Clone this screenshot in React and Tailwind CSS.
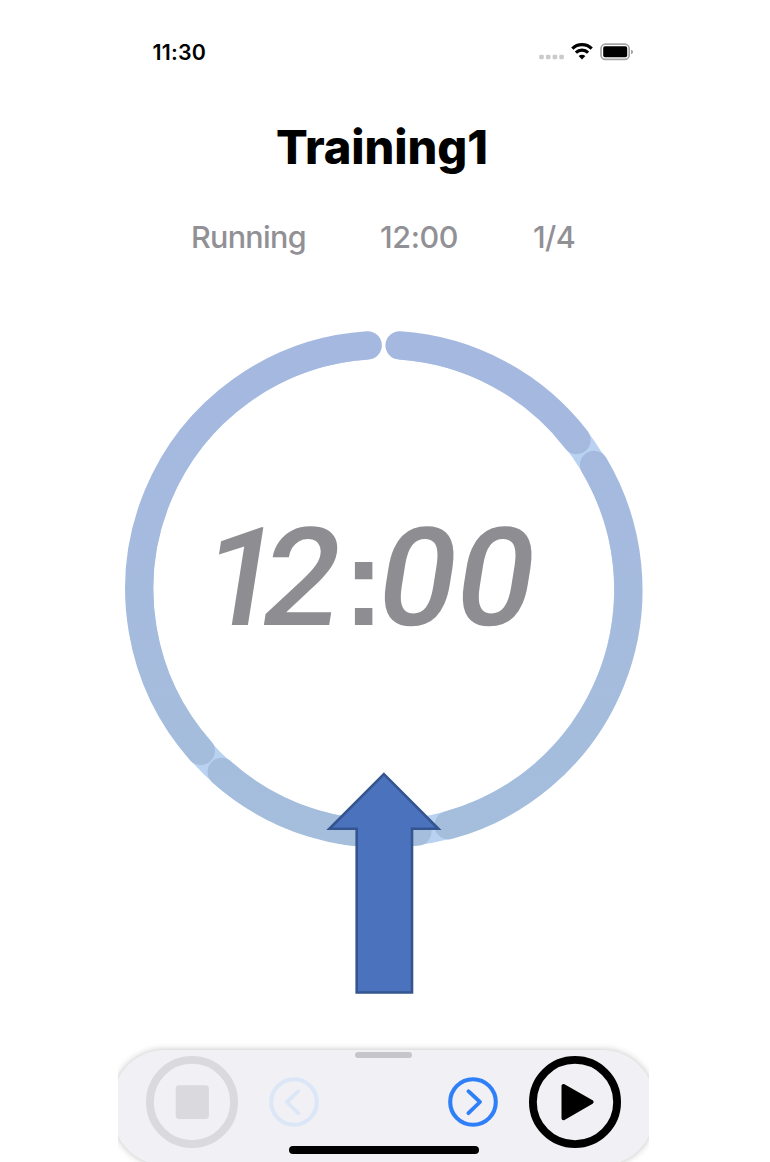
import React from "react";

const SEGMENTS = [
  "M281.6 15.4 A244.1 244.1 0 0 1 458.6 110",
  "M476.1 135 A244.1 244.1 0 0 1 330.6 495.2",
  "M299.4 501.6 A244.1 244.1 0 0 1 103.7 442",
  "M82.8 421 A244.1 244.1 0 0 1 249.7 15.4",
];

function StatusBar() {
  return (
    <div className="flex h-[104px] shrink-0 items-start justify-between pt-[38px] pr-[15px] pl-[34.5px]">
      <span className="text-[21.4px] leading-7 font-semibold tracking-[0.2px] text-black">11:30</span>
      <svg width="96" height="28" viewBox="0 0 96 28">
        <g fill="#cbcbcb">
          <rect x="1.2" y="16.8" width="4.6" height="4.4" rx="1.2" />
          <rect x="7.9" y="16.8" width="4.6" height="4.4" rx="1.2" />
          <rect x="14.6" y="16.8" width="4.6" height="4.4" rx="1.2" />
          <rect x="21.3" y="16.8" width="4.6" height="4.4" rx="1.2" />
        </g>
        <g fill="none" stroke="#000" strokeWidth="3.2">
          <path d="M34.3 10.6 A14 14 0 0 1 53.7 10.6" />
          <path d="M37.9 14.6 A8.8 8.8 0 0 1 50.1 14.6" />
        </g>
        <path d="M40.6 18 Q44 15.4 47.4 18 L44 21.5 Z" />
        <rect x="63" y="6.2" width="28.2" height="15.2" rx="4.4" fill="#fff" stroke="#a6a6a6" strokeWidth="1.7" />
        <rect x="65.2" y="8.3" width="24" height="11" rx="1.8" />
        <path d="M93 11.8 Q95.2 12.4 95.2 14 Q95.2 15.6 93 16.2 Z" fill="#a6a6a6" />
      </svg>
    </div>
  );
}

function Ring() {
  return (
    <svg className="col-start-1 row-start-1" width="531" height="520" viewBox="0 0 531 520">
      <defs>
        <linearGradient id="ring" gradientUnits="userSpaceOnUse" x1="0" y1="0" x2="0" y2="518">
          <stop offset="0" stopColor="#a5b8e0" />
          <stop offset="1" stopColor="#a5bedc" />
        </linearGradient>
      </defs>
      <g fill="none" strokeLinecap="round">
        <path d="M281.6 15.9 A244.1 244.1 0 1 1 249.7 15.9" stroke="#bad2f2" strokeWidth="27.4" strokeLinecap="butt" />
        {SEGMENTS.map((d) => (
          <path key={d} d={d} stroke="url(#ring)" strokeWidth="28.3" />
        ))}
      </g>
    </svg>
  );
}

function Countdown() {
  return (
    <div className="col-start-1 row-start-1 flex h-[160px] translate-y-[168px] items-baseline pl-[86px] font-[Roboto,sans-serif] text-[137px] leading-[160px] font-medium whitespace-nowrap text-[#8e8d92]">
      <span className="w-[60px] -skew-x-[9deg] tracking-[-20px]">1</span>
      <span className="w-[79px] -skew-x-[9deg]">2</span>
      <span className="w-[37px] font-['Liberation_Sans',Arial,sans-serif] text-[124px] font-bold tracking-[-5px]">:</span>
      <span className="w-[78px] -skew-x-[9deg]">0</span>
      <span className="w-[78px] -skew-x-[9deg]">0</span>
    </div>
  );
}

function UpArrow() {
  return (
    <svg className="absolute top-[440px] left-[207px]" width="118" height="226" viewBox="0 0 118 226">
      <path d="M58.9 4.2 L113.4 58.8 H87 V222.5 H31.7 V58.8 H4.4 Z" fill="#4b73bd" stroke="#34558f" strokeWidth="2.6" />
    </svg>
  );
}

function Chevron({ flip }) {
  return (
    <svg width="50" height="50" viewBox="0 0 50 50" fill="none" stroke={flip ? "#dbe7f7" : "#2f7ff8"}>
      <circle cx="25" cy="25" r="22.8" strokeWidth="4.1" />
      <path
        d={flip ? "M29.4 14.2 L17.8 25 L29.4 36.2" : "M20.4 14.2 L32 25 L20.4 36.2"}
        strokeWidth="3.8"
        strokeLinecap="round"
        strokeLinejoin="round"
      />
    </svg>
  );
}

function Dock() {
  return (
    <div className="flex h-[122px] shrink-0 justify-center overflow-hidden pt-[10px]">
      <div className="relative h-[115px] w-[541px] shrink-0 rounded-[51px] bg-[#f1f0f5] shadow-[0_0_7px_rgba(0,0,0,0.25)]">
        <div className="mx-auto h-[6px] w-[57px] translate-y-[2px] rounded-full bg-[#c6c5ca]" />
        <div className="flex items-center pl-[33px]">
          <button aria-label="Stop" className="size-[92px]">
            <svg width="92" height="92" viewBox="0 0 92 92">
              <circle cx="46" cy="46" r="42.1" fill="none" stroke="#dad9de" strokeWidth="7.8" />
              <rect x="29.7" y="29.3" width="33.2" height="33.6" rx="3.4" fill="#dad9de" />
            </svg>
          </button>
          <button aria-label="Previous" className="ml-[31px] size-[50px]"><Chevron flip /></button>
          <button aria-label="Next" className="ml-[129px] size-[50px]"><Chevron /></button>
          <button aria-label="Play" className="ml-[30.5px] size-[92px]">
            <svg width="92" height="92" viewBox="0 0 92 92">
              <circle cx="46" cy="46" r="42.1" fill="none" stroke="#000" strokeWidth="7.8" />
              <path d="M34.5 30 V62.2 L62.6 46 Z" stroke="#000" strokeWidth="4" strokeLinejoin="round" />
            </svg>
          </button>
        </div>
        <div className="absolute top-[96px] left-[176px] h-[8px] w-[190px] rounded-full bg-black" />
      </div>
    </div>
  );
}

export default function App() {
  return (
    <main className="h-[1162px] w-[770px] overflow-hidden bg-white pl-[118px] font-['Inter',sans-serif]">
      <div className="flex h-full w-[531px] flex-col">
        <StatusBar />
        <h1 className="h-[86px] pl-[158px] text-[47px] leading-[86px] font-extrabold tracking-[-0.1px] whitespace-nowrap text-black">
          Training1
        </h1>
        <div className="mt-[27px] flex h-10 text-[30.5px] leading-10 font-medium whitespace-nowrap text-[#919095]">
          <span className="w-[188px] pl-[73px]"><span className="tracking-[-0.7px]">Running</span></span>
          <span className="ml-[74px] w-[80px] tracking-[-0.4px]">12:00</span>
          <span className="ml-[73px] tracking-[-0.6px]">1/4</span>
        </div>
        <section className="relative mt-[73px] grid h-[710px] grid-cols-1 content-start">
          <Ring />
          <Countdown />
          <UpArrow />
        </section>
        <Dock />
      </div>
    </main>
  );
}
